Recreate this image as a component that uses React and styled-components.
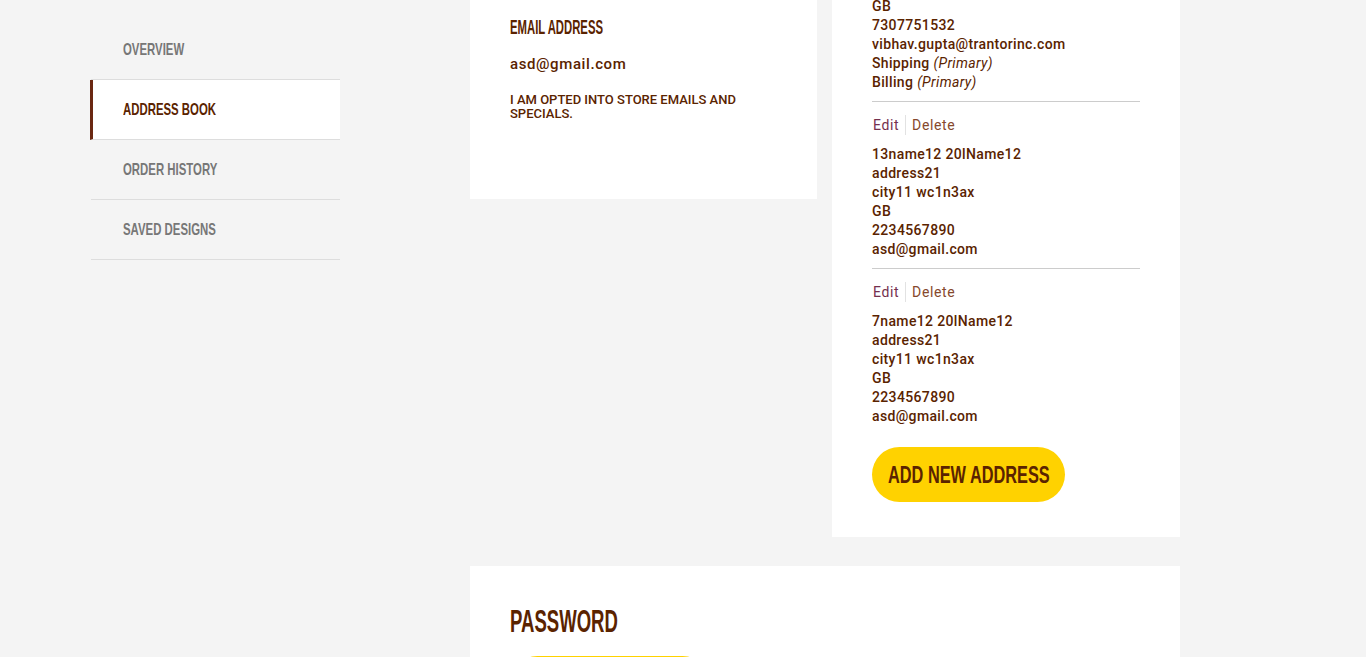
import React, { useLayoutEffect } from "react";
import styled, { createGlobalStyle } from "styled-components";

const GlobalStyle = createGlobalStyle`
  html, body {
    margin: 0;
    padding: 0;
    background: #f4f4f4;
  }
  body {
    font-family: Roboto, "Liberation Sans", Arial, sans-serif;
    color: #5a2300;
  }
  * {
    box-sizing: border-box;
  }
`;

const addresses = [
  {
    lines: [
      "vibhav gupta",
      "221b Baker Street",
      "london nw16xe",
      "GB",
      "7307751532",
      "vibhav.gupta@trantorinc.com",
    ],
    primary: true,
  },
  {
    lines: [
      "13name12 20lName12",
      "address21",
      "city11 wc1n3ax",
      "GB",
      "2234567890",
      "asd@gmail.com",
    ],
  },
  {
    lines: [
      "7name12 20lName12",
      "address21",
      "city11 wc1n3ax",
      "GB",
      "2234567890",
      "asd@gmail.com",
    ],
  },
];

const menu = ["Overview", "Address Book", "Order History", "Saved Designs"];

function App() {
  // the account page is shown part way down, like the screenshot
  useLayoutEffect(() => {
    window.scrollTo(0, 416);
  }, []);

  return (
    <Page>
      <GlobalStyle />
      <Header>
        <Brand>
          <Cond $scale={0.6}>MY STORE</Cond>
        </Brand>
      </Header>
      <TitleBar>
        <Cond $scale={0.58}>MY ACCOUNT</Cond>
      </TitleBar>

      <Layout>
        <Sidebar>
          {menu.map((item) => (
            <SideLink key={item} $active={item === "Address Book"}>
              <Cond $scale={0.67}>{item.toUpperCase()}</Cond>
            </SideLink>
          ))}
        </Sidebar>

        <Main>
          <Cards>
            <Card>
              <CardTitle $space={40}>
                <Cond $scale={0.58}>PERSONAL DETAILS</Cond>
              </CardTitle>
              <Field>
                <FieldLabel>
                  <Cond $scale={0.58}>NAME</Cond>
                </FieldLabel>
                <FieldValue>vibhav gupta</FieldValue>
              </Field>
              <Field>
                <FieldLabel>
                  <Cond $scale={0.58}>EMAIL ADDRESS</Cond>
                </FieldLabel>
                <FieldValue>asd@gmail.com</FieldValue>
              </Field>
              <OptIn>I am opted into store emails and specials.</OptIn>
            </Card>

            <Card $bottom={35}>
              <CardTitle $space={20}>
                <Cond $scale={0.58}>ADDRESS BOOK</Cond>
              </CardTitle>
              {addresses.map((a, i) => (
                <AddressBlock key={i}>
                  <Actions>
                    <EditLink>Edit</EditLink>
                    <DeleteLink>Delete</DeleteLink>
                  </Actions>
                  {a.lines.map((l, j) => (
                    <AddressLine key={j}>{l}</AddressLine>
                  ))}
                  {a.primary && (
                    <>
                      <AddressLine>
                        Shipping <Tag>(Primary)</Tag>
                      </AddressLine>
                      <AddressLine>
                        Billing <Tag>(Primary)</Tag>
                      </AddressLine>
                    </>
                  )}
                </AddressBlock>
              ))}
              <PillButton $w={193} $top={12}>
                <Cond $scale={0.68} $origin="center">
                  ADD NEW ADDRESS
                </Cond>
              </PillButton>
            </Card>
          </Cards>

          <WideCard>
            <CardTitle $space={20}>
              <Cond $scale={0.58}>PASSWORD</Cond>
            </CardTitle>
            <PillButton $w={200}>
              <Cond $scale={0.68} $origin="center">
                CHANGE PASSWORD
              </Cond>
            </PillButton>
          </WideCard>
        </Main>
      </Layout>

      <Footer>
        <FooterLinks>
          <span>Contact us</span>
          <span>Delivery</span>
          <span>Returns</span>
          <span>Privacy policy</span>
        </FooterLinks>
      </Footer>
    </Page>
  );
}

export default App;

const Page = styled.div`
  min-height: 2518px;
  display: flex;
  flex-direction: column;
`;

const Cond = styled.span`
  display: inline-block;
  font-family: "Liberation Sans Narrow", "Liberation Sans", Arial, sans-serif;
  font-weight: 700;
  white-space: nowrap;
  transform: scaleX(${(p) => p.$scale || 0.8});
  transform-origin: ${(p) => p.$origin || "left"} center;
`;

const Header = styled.header`
  height: 100px;
  background: #fff;
  border-bottom: 1px solid #e5e5e5;
  display: flex;
  align-items: center;
  padding: 0 90px;
`;

const Brand = styled.div`
  font-size: 30px;
  color: #5a2300;
`;

const TitleBar = styled.div`
  height: 126px;
  display: flex;
  align-items: center;
  padding: 0 90px;
  font-size: 40px;
  color: #5a2300;
`;

const Layout = styled.div`
  display: flex;
  align-items: flex-start;
  gap: 130px;
  padding: 0 0 80px 90px;
`;

const Sidebar = styled.nav`
  margin-top: 210px;
  width: 250px;
  flex-shrink: 0;
  display: flex;
  flex-direction: column;
`;

const SideLink = styled.div`
  height: 60px;
  display: flex;
  align-items: center;
  font-size: 17px;
  color: ${(p) => (p.$active ? "#5a2300" : "#777")};
  background: ${(p) => (p.$active ? "#fff" : "transparent")};
  border-bottom: 1px solid #ddd;
  border-left: ${(p) => (p.$active ? "3px solid #6a2812" : "none")};
  margin-left: ${(p) => (p.$active ? "0" : "1px")};
  padding-left: ${(p) => (p.$active ? "30px" : "32px")};
`;

const Main = styled.main`
  width: 710px;
  flex-shrink: 0;
`;

const Cards = styled.div`
  display: grid;
  grid-template-columns: 347px 348px;
  gap: 15px;
  align-items: start;
`;

const Card = styled.section`
  background: #fff;
  padding: 40px 40px ${(p) => p.$bottom || 40}px;
`;

const WideCard = styled.section`
  background: #fff;
  margin-top: 29px;
  padding: 40px;
`;

const CardTitle = styled.h2`
  margin: 0 0 ${(p) => p.$space}px;
  font-size: 32px;
  line-height: 40px;
  font-weight: 700;
  color: #5a2300;

  ${WideCard} & {
    line-height: 30px;
  }
`;

const Field = styled.div`
  margin-bottom: 24px;
`;

const FieldLabel = styled.div`
  font-size: 19.5px;
  line-height: 24px;
  color: #5a2300;
`;

const FieldValue = styled.div`
  margin-top: 12px;
  font-size: 15px;
  line-height: 24px;
  letter-spacing: 0.6px;
  font-weight: 500;
  color: #5a2300;
`;

const OptIn = styled.p`
  margin: -7px 0 38px;
  font-size: 13px;
  line-height: 14px;
  font-weight: 500;
  text-transform: uppercase;
  color: #5a2300;
`;

const AddressBlock = styled.div`
  padding-bottom: 9px;

  & + & {
    border-top: 1px solid #ccc;
    padding-top: 13px;
  }
`;

const Actions = styled.div`
  display: flex;
  height: 20px;
  align-items: center;
  margin-bottom: 10px;
  padding-left: 1px;
  font-size: 14px;
  letter-spacing: 0.6px;
`;

const EditLink = styled.span`
  color: #74304e;
  padding-right: 6px;
  border-right: 1px solid #e2e2e2;
  line-height: 20px;
`;

const DeleteLink = styled.span`
  color: #86482c;
  padding-left: 6px;
  line-height: 20px;
`;

const AddressLine = styled.div`
  font-size: 14px;
  line-height: 19px;
  font-weight: 500;
  letter-spacing: 0.35px;
  color: #5a2300;
  white-space: nowrap;
`;

const Tag = styled.em`
  font-weight: 400;
`;

const PillButton = styled.button`
  display: flex;
  align-items: center;
  justify-content: center;
  width: ${(p) => p.$w}px;
  height: 55px;
  margin-top: ${(p) => p.$top || 0}px;
  padding: 0;
  border: none;
  border-radius: 28px;
  background: #ffd200;
  color: #5a2300;
  font-size: 24px;
  cursor: pointer;
`;

const Footer = styled.footer`
  margin-top: auto;
  height: 300px;
  background: #5a2300;
  display: flex;
  align-items: center;
  padding: 0 90px;
`;

const FooterLinks = styled.div`
  display: flex;
  gap: 40px;
  color: #fff;
  font-size: 14px;
`;
